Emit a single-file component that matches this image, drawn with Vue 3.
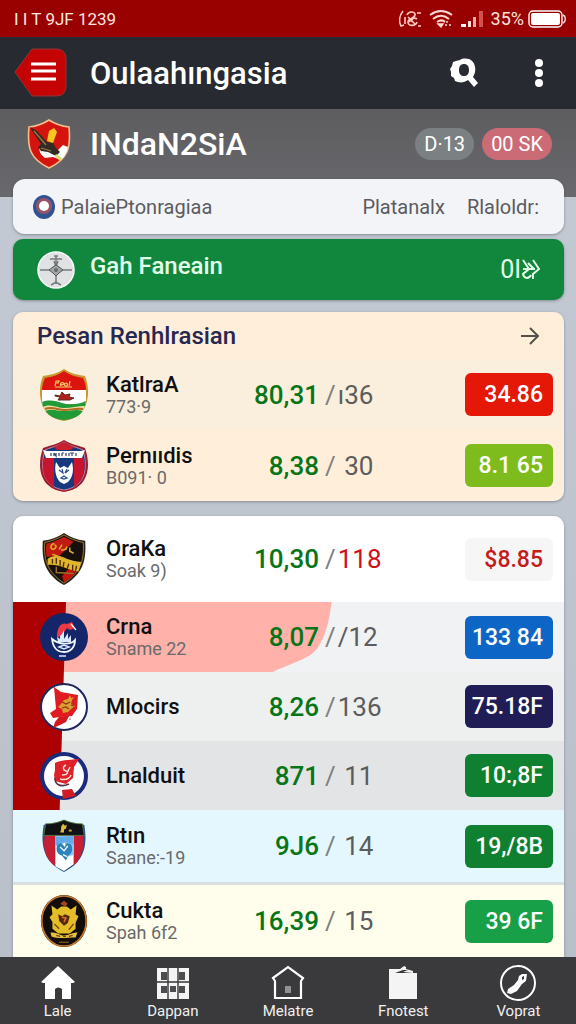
<script setup>
import { ref } from 'vue'

const activeNav = ref('home')

// teams on the cream card
const favourites = [
  { crest: 'kattra', name: 'KatlraA', sub: '773·9', score: '80,31', rest: '/ı36', odds: '34.86', tone: 'beige', color: 'red' },
  { crest: 'pernudis', name: 'Pernııdis', sub: 'B091· 0', score: '8,38', rest: '/ 30', odds: '8.1 65', tone: 'cream', color: 'lime' }
]

// the striped group has the red band running behind its crests
const groups = [
  {
    id: 'top',
    teams: [
      { crest: 'oraka', name: 'OraKa', sub: 'Soak 9)', score: '10,30', rest: '/118', odds: '$8.85', tone: 'white', color: 'plain', alert: true }
    ]
  },
  {
    id: 'mid',
    striped: true,
    teams: [
      { crest: 'crna', name: 'Crna', sub: 'Sname 22', score: '8,07', rest: '//12', odds: '133 84', tone: 'grey', color: 'blue', swoosh: true },
      { crest: 'mlocirs', name: 'Mlocirs', score: '8,26', rest: '/136', odds: '75.18F', tone: 'silver', color: 'navy' },
      { crest: 'lnalduit', name: 'Lnalduit', score: '871', rest: '/ 11', odds: '10:,8F', tone: 'smoke', color: 'green' }
    ]
  },
  {
    id: 'low',
    teams: [
      { crest: 'run', name: 'Rtın', sub: 'Saane:-19', score: '9J6', rest: '/ 14', odds: '19,/8B', tone: 'sky', color: 'green' },
      { crest: 'cukta', name: 'Cukta', sub: 'Spah 6f2', score: '16,39', rest: '/ 15', odds: '39 6F', tone: 'ivory', color: 'emerald' }
    ]
  }
]

const cards = [
  { id: 'fav', title: 'Pesan Renhlrasian', groups: [{ id: 'fav', teams: favourites }] },
  { id: 'all', groups }
]

const navItems = [
  { id: 'home', label: 'Lale' },
  { id: 'grid', label: 'Dappan' },
  { id: 'house', label: 'Melatre' },
  { id: 'bag', label: 'Fnotest' },
  { id: 'tool', label: 'Voprat' }
]
</script>

<template>
  <div class="app">
    <svg class="sprite" aria-hidden="true">
      <symbol id="crest-kattra" viewBox="0 0 50 54">
        <path d="M25 1c6 4 13 6 21 7 5 12 4 28-4 37-5 5-11 7-17 8-6-1-12-3-17-8C0 36-1 20 4 8 12 7 19 5 25 1z" fill="#c79a2e" />
        <path d="M25 3c6 4 12 6 19 7 2 4 3 8 3 12H3c0-4 1-8 3-12 7-1 13-3 19-7z" fill="#dc1410" />
        <path d="M3 22h44v14H3z" fill="#fff" />
        <path d="M3 34c8-3 14-1 20 1s16 2 24-2c-1 12-9 18-22 19C12 51 5 45 3 34z" fill="#219a38" />
        <path d="M4 39c8-4 14 1 21 1s14-2 21-2l-2 5c-7-2-12 0-19 0s-12-3-19 0z" fill="#f2dfa3" />
        <path d="M6 41c7-3 13 1 19 1s13-2 19-1" fill="none" stroke="#b06c20" stroke-width="2" />
        <path d="M16 18l1-5h3l-1 2h-3m6 3c-2-3 2-5 3-2l-3 1m5-2c-2 0-2 3 0 3s2-3 0-3m4-2l-1 5m-14 1h17" fill="none" stroke="#f7cf6a" stroke-width="1.2" />
        <path d="M16 27l5 1 2-4 3 3 5-1-1 3 5 1-4 2H19l2-3-5-1z" fill="#b71c1c" stroke="#57301d" stroke-width="1" />
      </symbol>

      <symbol id="crest-pernudis" viewBox="0 0 50 54">
        <path d="M25 1c6 4 13 5 21 8 5 14 4 29-5 37-4 4-10 6-16 7-6-1-12-3-16-7C0 38-1 23 4 9 12 6 19 5 25 1z" fill="#9b1d33" />
        <path d="M25 3c6 4 12 5 19 8 4 13 3 26-4 33-4 4-9 6-15 7-6-1-11-3-15-7C3 37 2 24 6 11c7-3 13-4 19-8z" fill="#17377f" stroke="#e8c9cf" stroke-width=".6" />
        <path d="M5 19h10v29C6 43 2 33 5 19zM35 19h10c2 13-1 23-10 29z" fill="#c7152f" />
        <path d="M15 8l10-5 10 5-3 3H18z" fill="#c71f2e" />
        <path d="M4 11l4 1h34l4-1-3 8H7z" fill="#fff" />
        <path d="M12 14v3m3-3v3m0-3l2 3v-3m3 0v3m3-3v3m0-3h2m2 0v3m3-3v3m3-3v3m-2-3h4m2 0v3" fill="none" stroke="#36416d" stroke-width="1.2" />
        <path d="M17 23c-2 8 0 16 4 20l4 2 4-2c5-5 6-12 4-20l-4 6-4-2-4 2z" fill="#fff" />
        <path d="M20 31l4 3-1-4m7 1l-4 3 2-4M22 39l3-2 3 2-3 1z" fill="none" stroke="#244a95" stroke-width="1.2" />
      </symbol>

      <symbol id="crest-oraka" viewBox="0 0 48 56">
        <path d="M24 1c6 4 13 7 22 8 1 19-1 34-22 46C3 43 1 28 2 9c9-1 16-4 22-8z" fill="#2a2114" />
        <path d="M24 3c6 4 12 6 20 8 1 17-2 30-20 42C6 41 3 28 4 11c8-2 14-4 20-8z" fill="#15100b" stroke="#9d7b35" stroke-width="1" />
        <path d="M24 5c4 2 7 4 10 5L20 24 6 26c-1-5-1-10 0-14 7-1 12-4 18-7z" fill="#c01a12" />
        <path d="M28 39l10-3c-2 7-6 11-14 16l-2-6z" fill="#c6130d" />
        <path d="M7 28c10-8 18 2 35 3l-3 10c-12-2-19-8-32-7z" fill="#e0b72c" />
        <path d="M12 28v5m4-6v6m4-4v6m4-4l-1 6m6-4l-2 6m6-5v6m4-5l-1 5" fill="none" stroke="#4d2911" stroke-width="1.4" />
        <path d="M14 12c-5 1-4 6-1 6 3-1 4-5 1-4m5 4l3-5m-1 6l5-1 1-3m3 1v4l4 2m-22 1l14 5" fill="none" stroke="#e2a62c" stroke-width="1.6" />
        <path d="M16 36v6l18 1" fill="none" stroke="#a06b29" stroke-width="1.5" />
      </symbol>

      <symbol id="crest-crna" viewBox="0 0 50 50">
        <circle cx="25" cy="25" r="24" fill="#142669" />
        <path d="M18 22c1-8 5-12 10-10l5-2 3 6-5 2-3-2-5 7-5 3z" fill="#ed3846" />
        <path d="M32 12l5 6" stroke="#fff" stroke-width="1.2" />
        <path d="M21 24l2-2 2-4v9l4-6v6l3-4v7H19l-1-5 3 2z" fill="#d8eaff" />
        <path d="M13 27c1 9 5 13 12 13s11-5 11-12c-4 5-16 5-23-1z" fill="none" stroke="#eef6ff" stroke-width="1.8" />
        <path d="M20 35l5-2 5 2-5 2zM20 44h7" fill="none" stroke="#d8eaff" stroke-width="1.5" />
      </symbol>

      <symbol id="crest-mlocirs" viewBox="0 0 50 50">
        <circle cx="25" cy="25" r="23" fill="#fff" stroke="#20275e" stroke-width="2" />
        <path d="M15 5l7 5 17 3-1 14-5 7-12 1-7 1-3-5 6-4z" fill="#e01c20" />
        <path d="M26 34h4l-3 6-6 3-7 3 2-6 4-5z" fill="#d41820" />
        <path d="M31 13l-2 4-4 1-3 4-3 3 4 2 1 4 5-1 3-3 4-3-4-2 1-4 2-3-3 1z" fill="#d7a132" />
        <path d="M23 20l4 2 4-2m-8 6l4-1 3 2m2-4l3 1" fill="none" stroke="#983010" stroke-width="1.2" />
        <circle cx="31" cy="37" r="1" fill="#d88d8b" />
      </symbol>

      <symbol id="crest-lnalduit" viewBox="0 0 50 50">
        <circle cx="25" cy="25" r="22" fill="#fff" stroke="#1b2b7c" stroke-width="4" />
        <path d="M16 12c6-3 12-3 24-4l-5 8-1 11-7 6-11-3-1-6 1-5z" fill="#df2028" />
        <path d="M23 39l10-1 4 7-13 3z" fill="#cf1b26" />
        <path d="M27 14c-4 2-3 5 0 6s2 4-4 4m8-8l-3 6m4 2c-2 5-7 5-11 4" fill="none" stroke="#ffe2d9" stroke-width="1.4" />
        <path d="M16 27c0 8 7 9 14 6" fill="none" stroke="#563443" stroke-width="1.6" />
      </symbol>

      <symbol id="crest-run" viewBox="0 0 48 56">
        <path d="M24 1c6 2 14 4 21 5 4 23-1 39-21 49C4 45-1 29 3 6c7-1 15-3 21-5z" fill="#25508b" />
        <path d="M4 17h11v32C4 41 2 30 4 17zM34 17h10c1 13-1 23-10 31z" fill="#c51e35" />
        <path d="M15 17h19v30l-10 7-9-5z" fill="#fff" />
        <path d="M25 17h9v20l-9 3z" fill="#8cc6ef" />
        <path d="M15 18h19v8l-8-2-11 4z" fill="#62abe9" />
        <path d="M5 5c7 0 13-1 19-4 6 3 12 4 19 4l2 12H3z" fill="#101115" stroke="#63813c" stroke-width=".8" />
        <path d="M21 8l2-3 2 2 2-1-1 4-2 1v3h-4l1-3z" fill="#dfbd36" />
        <path d="M29 12h3" stroke="#d1a340" stroke-width="2" />
        <path d="M17 27c-2 5 0 10 5 11l4 5 2-5c4-1 6-7 3-12l-4-1-2 4-4-4z" fill="#2a82be" />
        <path d="M20 29l4 4 4-5m-5 9l4 2" fill="none" stroke="#fff" stroke-width="1.3" />
      </symbol>

      <symbol id="crest-cukta" viewBox="0 0 50 56">
        <ellipse cx="25" cy="28" rx="24" ry="27" fill="#211006" />
        <ellipse cx="25" cy="28" rx="23" ry="26" fill="#120d09" stroke="#ca7b2d" stroke-width="1.6" />
        <path d="M12 12l6 4 4-3h6l4 3 6-4-1 9 3 2-3 7v6l-6 5H19l-6-5v-7l-3-5 3-3z" fill="#e4bd28" />
        <path d="M21 10l4-3 4 3-3 3z" fill="#aa4421" />
        <path d="M19 21l4 2 3-2 5 2-2 7-4 3-5-5z" fill="#542a12" />
        <path d="M23 24l4 1-2 4" fill="none" stroke="#e4722d" stroke-width="1.6" />
        <path d="M15 31l5 5m15-5l-5 6" stroke="#79500e" stroke-width="1.5" />
        <path d="M11 40c7-1 9 3 14 3s10-4 14-3l-2 5c-7 0-18 2-25-1z" fill="#e7bf3c" />
        <path d="M17 43l4 1m3 0h3m3 0l4-1" stroke="#5d3c12" stroke-width="1.2" />
        <path d="M20 50h10" stroke="#9c701f" stroke-width="1" />
      </symbol>
    </svg>

    <div class="status">
      <span class="status__time">I I T 9JF 1239</span>
      <div class="status__icons">
        <svg width="23" height="18" viewBox="0 0 23 18" fill="none" stroke="#ffc9c2" stroke-width="1.6">
          <path d="M4 1C0 6 0 12 2 16l3-1M8 5c2-5 9-3 8 0-1 4-7 3-7 7 0 5 8 4 9 0M9 7l7 7m0-8l-6 6m8-9h4m-4 6c-3-2-6 0-5 3M6 7v7m13 2h3" />
        </svg>
        <svg width="24" height="18" viewBox="0 0 24 18" fill="none" stroke="#ffd8d2" stroke-width="2">
          <path d="M1 5c7-5 15-5 22 0M4 9c5-4 11-4 16 0M8 12c3-2 6-2 8 0" />
          <path d="M9 14l3 3 2-3zM18 11v2m-2 2h2m2 0h2" fill="#ffd8d2" stroke-width="1.4" />
        </svg>
        <svg width="24" height="18" viewBox="0 0 24 18">
          <path d="M1 14h5v3H1z" fill="#fff" />
          <path d="M8 11h3v6H8z" fill="#ffe1de" />
          <path d="M13 7h3v10h-3z" fill="#f6aaa6" />
          <path d="M19 1h4v16h-4z" fill="#d4514f" />
        </svg>
        <span class="status__battery">35%</span>
        <svg width="38" height="18" viewBox="0 0 38 18">
          <rect x="1" y="1" width="33" height="16" rx="4" fill="none" stroke="#fff" stroke-width="1.4" />
          <rect x="3" y="3" width="29" height="12" rx="2" fill="#fff" />
          <path d="M35 5c3 1 3 7 0 8" fill="none" stroke="#ffd3cf" stroke-width="1.4" />
        </svg>
      </div>
    </div>

    <header class="topbar">
      <button class="topbar__menu" type="button" aria-label="Menu">
        <svg width="54" height="50" viewBox="0 0 54 50">
          <path d="M18 1h24q10 0 10 10v27q0 10-10 10H18L1 24z" fill="#c40304" stroke="#8f3438" stroke-width="1" />
          <path d="M17 16h25M17 23h25M17 31h25" stroke="#fff" stroke-width="3" />
        </svg>
      </button>
      <h1 class="topbar__title">Oulaahıngasia</h1>
      <button class="topbar__icon" type="button" aria-label="Search">
        <svg width="30" height="30" viewBox="0 0 30 30">
          <path
            fill="#fff"
            fill-rule="evenodd"
            d="M11 2c3-2 9-2 12 1 4 4 4 10 2 14l-1 2 5 6-4 4-6-7c-4 3-9 3-13 1l-1-3-3-2v-4l-1-3 2-3 1-4 3-1zM10 12c0 4 2 6 5 6s5-2 5-6-2-6-5-6-5 2-5 6z"
          />
        </svg>
      </button>
      <button class="topbar__icon" type="button" aria-label="More">
        <svg width="12" height="30" viewBox="0 0 12 30" fill="#fff">
          <circle cx="6" cy="5" r="4" />
          <circle cx="6" cy="15" r="4" />
          <circle cx="6" cy="25" r="4" />
        </svg>
      </button>
    </header>

    <main class="content">
      <section class="country">
        <svg width="44" height="50" viewBox="0 0 44 50">
          <path d="M22 1c6 4 12 6 20 7 2 21-1 32-20 41C3 40 0 29 2 8c8-1 14-3 20-7z" fill="#d5130f" stroke="#f3c08c" stroke-width="1.6" />
          <path d="M13 26l7 2 10 4 6-6 5 2c-1 6-4 10-7 13l-8-3-8 1c-4-3-7-7-5-13z" fill="#fff" />
          <path d="M3 8l7 4 10 11 6 1 3 5 4 4-4 4-8-4-7-1-3-4 3-3L6 13z" fill="#322c25" />
          <path d="M22 12l5-3 3 4-4 11-6-2z" fill="#f5c720" />
          <path d="M7 12l12 14m-5 3l10 3" stroke="#9b7b42" stroke-width="1.3" />
          <path d="M29 35l6 4-2 3-5-5z" fill="#d8de75" />
        </svg>
        <h2 class="country__name">INdaN2SiA</h2>
        <span class="pill">D·13</span>
        <span class="pill pill--rose">00 SK</span>
      </section>

      <div class="filter">
        <svg width="22" height="24" viewBox="0 0 22 24">
          <ellipse cx="11" cy="12" rx="11" ry="12" fill="#315390" />
          <ellipse cx="11" cy="11" rx="8" ry="8" fill="#96546b" />
          <circle cx="11" cy="11" r="5" fill="#fff" />
        </svg>
        <span class="filter__label">PalaiePtonragiaa</span>
        <button class="filter__tab" type="button">Platanalx</button>
        <button class="filter__tab" type="button">Rlaloldr:</button>
      </div>

      <a class="banner" href="#">
        <svg width="38" height="38" viewBox="0 0 38 38">
          <circle cx="19" cy="19" r="18" fill="#dfe1e2" stroke="#f5fff7" stroke-width="1.5" />
          <path d="M19 5v28M3 19h32M13 8h12M17 5h4m-4 5l2 6 2-6M14 34l5-3 5 3" fill="none" stroke="#777b7d" stroke-width="1.5" />
          <path d="M16 16l3-2 3 2 4 3-4 3-3 3-3-3-4-3z" fill="#a2a4a5" stroke="#4f5557" />
          <circle cx="19" cy="19" r="2" fill="#666c6d" />
        </svg>
        <span class="banner__title">Gah Faneain</span>
        <span class="banner__end">
          0I
          <svg width="19" height="21" viewBox="0 0 19 21" fill="none" stroke="#e4ffe9" stroke-width="2">
            <path d="M2 1l6 9-6 5c1 5 6 5 8 1M2 10h12M7 4l6 6M12 1l6 9-6 5v5" />
          </svg>
        </span>
      </a>

      <section v-for="card in cards" :key="card.id" class="card" :class="`card--${card.id}`">
        <div v-if="card.title" class="card__head">
          <h3 class="card__title">{{ card.title }}</h3>
          <button class="card__more" type="button" aria-label="Open">
            <svg width="20" height="20" viewBox="0 0 20 20" fill="none" stroke="#55504c" stroke-width="2">
              <path d="M1 10h17M10 2l8 8-8 8" />
            </svg>
          </button>
        </div>
        <ul
          v-for="group in card.groups"
          :key="group.id"
          class="group"
          :class="{ 'group--striped': group.striped }"
        >
          <li v-for="team in group.teams" :key="team.crest" class="team" :class="`team--${team.tone}`">
            <svg v-if="team.swoosh" class="team__swoosh" viewBox="0 0 320 70" preserveAspectRatio="none">
              <path d="M0 0h319c-2 18-6 34-14 46-8 11-26 15-45 24H0z" fill="#ffb1aa" />
            </svg>
            <svg class="team__crest"><use :href="`#crest-${team.crest}`" /></svg>
            <div class="team__text">
              <div class="team__name">{{ team.name }}</div>
              <div v-if="team.sub" class="team__sub">{{ team.sub }}</div>
            </div>
            <div class="team__score">{{ team.score }}</div>
            <div class="team__rest" :class="{ 'team__rest--alert': team.alert }">
              <span class="team__slash">{{ team.rest[0] }}</span>{{ team.rest.slice(1) }}
            </div>
            <button class="odds" :class="`odds--${team.color}`" type="button">{{ team.odds }}</button>
          </li>
        </ul>
      </section>
    </main>

    <nav class="nav">
      <a
        v-for="item in navItems"
        :key="item.id"
        class="nav__item"
        href="#"
        :aria-current="activeNav === item.id ? 'page' : undefined"
        @click.prevent="activeNav = item.id"
      >
        <svg width="36" height="36" viewBox="0 0 36 36">
          <path v-if="item.id === 'home'" d="M18 1l17 16-2 1h-2v16h-9V24q-4-3-7 0v10H5V18H3l-2-1z" fill="#fff" />
          <g v-else-if="item.id === 'grid'">
            <path d="M2 3h32v31H2z" fill="#f4f4f4" />
            <path d="M6 7h6v8H6zM24 7h6v8h-6zM6 21h6v7H6zM15 21h6v6h-6zM24 21h6v7h-6z" fill="#4c4c4e" />
            <path d="M13 3v31M23 3v31M2 17h32" stroke="#343436" stroke-width="1.4" />
          </g>
          <g v-else-if="item.id === 'house'">
            <path d="M3 13L18 2l15 11-2 3v17H5V16z" fill="none" stroke="#fff" stroke-width="2.2" />
            <path d="M15 21h6v7h-6z" fill="#929293" />
          </g>
          <g v-else-if="item.id === 'bag'">
            <path d="M4 4h11l4-3 2 1v2l7 2v2h4v26H4z" fill="#f4f4f4" />
            <path d="M10 8l8-3h5l-5 2 10 1z" fill="#38383a" />
          </g>
          <g v-else>
            <circle cx="18" cy="18" r="17" fill="none" stroke="#fff" stroke-width="2" />
            <path d="M19 11l3-2h5l-1 7-4 3-5 7-6 3-4-1 1-4 6-4 4-5z" fill="#fff" />
            <path d="M22 12l2-1v3l-2 1z" fill="#39393b" />
          </g>
        </svg>
        <span>{{ item.label }}</span>
      </a>
    </nav>
  </div>
</template>

<style>
body {
  margin: 0;
  background: #c1c7d0;
}
</style>

<style scoped>
* {
  box-sizing: border-box;
}

.app {
  min-height: 100vh;
  display: flex;
  flex-direction: column;
  font-family: Roboto, 'Liberation Sans', sans-serif;
}

h1,
h2,
h3,
ul {
  margin: 0;
  padding: 0;
  list-style: none;
}

svg {
  display: block;
  flex: none;
}

button {
  font: inherit;
  color: inherit;
  padding: 0;
  border: 0;
  background: none;
  cursor: pointer;
}

a {
  color: inherit;
  text-decoration: none;
}

.sprite {
  position: absolute;
  width: 0;
  height: 0;
}

.status {
  height: 37px;
  padding: 0 10px 0 14px;
  display: flex;
  align-items: center;
  justify-content: space-between;
  background: #990000;
  color: #ffe4df;
  font-size: 18px;
}

.status__time {
  font-size: 17px;
}

.status__icons {
  display: flex;
  align-items: center;
  gap: 7px;
}

.status__battery {
  margin-right: -3px;
}

.topbar {
  height: 72px;
  padding: 0 31px 0 14px;
  display: flex;
  align-items: center;
  background: #272a31;
  color: #fff;
}

.topbar__title {
  flex: 1;
  margin-left: 22px;
  font-size: 31px;
  font-weight: 500;
}

.topbar__icon {
  margin-left: 54px;
}

.content {
  flex: 1;
  padding: 0 12px 0 13px;
  background: linear-gradient(#5d5d60, #69696d 88px, #c3c9d2 88px, #b9c0ca);
}

.country {
  height: 70px;
  padding: 0 12px 0 14px;
  display: flex;
  align-items: center;
  color: #fff;
}

.country__name {
  flex: 1;
  margin-left: 19px;
  font-size: 32px;
  font-weight: 500;
}

.pill {
  height: 32px;
  margin-left: 8px;
  padding: 0 9px;
  border-radius: 16px;
  background: #7b8083;
  font-size: 20px;
  line-height: 32px;
}

.pill--rose {
  background: #cb6b75;
}

.filter {
  height: 55px;
  padding: 0 25px 0 20px;
  display: flex;
  align-items: center;
  border-radius: 12px;
  background: #f3f4f8;
  box-shadow: 0 1px 3px rgba(40, 50, 60, 0.4);
  color: #5b5b60;
  font-size: 20px;
}

.filter__label {
  flex: 1;
  margin-left: 6px;
}

.filter__tab {
  margin-left: 22px;
}

.banner {
  height: 61px;
  margin-top: 5px;
  padding: 0 24px;
  display: flex;
  align-items: center;
  border-radius: 10px;
  background: #10873d;
  box-shadow: 0 1px 3px rgba(40, 50, 60, 0.4);
  color: #e4ffe9;
  font-size: 25px;
}

.banner__title {
  flex: 1;
  margin-left: 15px;
  padding-bottom: 8px;
  font-size: 24px;
  font-weight: 500;
}

.banner__end {
  display: flex;
  align-items: center;
}

.card {
  margin-top: 15px;
  overflow: hidden;
  border-radius: 10px;
  box-shadow: 0 1px 3px rgba(40, 50, 60, 0.4);
}

.card--fav {
  margin-top: 12px;
}

.card--all {
  border-radius: 10px 10px 0 0;
}

.card__head {
  height: 47px;
  padding: 0 24px;
  display: flex;
  align-items: center;
  justify-content: space-between;
  background: #ffeeda;
}

.card__title {
  color: #28274f;
  font-size: 24px;
  font-weight: 500;
}

.group {
  position: relative;
}

/* red band behind the crests, a little narrower at the foot */
.group--striped::before {
  content: '';
  position: absolute;
  z-index: 1;
  top: 0;
  bottom: 0;
  left: 0;
  width: 53px;
  background: #ad0000;
  clip-path: polygon(0 0, 100% 0, 88% 100%, 0 100%);
}

.team {
  position: relative;
  height: 71px;
  padding: 0 11px 0 26px;
  display: grid;
  grid-template-columns: 50px minmax(0, 1fr) 80px 146px 88px;
  align-items: center;
}

.team__swoosh {
  position: absolute;
  top: 0;
  left: 0;
  width: 58%;
  height: 100%;
}

.team__crest {
  position: relative;
  z-index: 2;
  width: 50px;
  height: 54px;
}

.team__text,
.team__score,
.team__rest {
  position: relative;
  white-space: nowrap;
}

.team__text {
  padding-left: 17px;
}

.team__name {
  color: #101012;
  font-size: 22px;
  font-weight: 500;
  line-height: 24px;
}

.team__sub {
  color: #6a6a6a;
  font-size: 18px;
  line-height: 20px;
}

.team__score {
  color: #087518;
  font-size: 26px;
  font-weight: 500;
  text-align: right;
}

.team__rest {
  padding-left: 6px;
  color: #5c5c5c;
  font-size: 26px;
}

.team__rest--alert {
  color: #d01018;
}

.team__slash {
  margin-right: 2px;
  color: #808080;
}

.team--white {
  height: 86px;
  background: #fff;
}

.team--beige {
  background: #f9efdc;
}

.team--cream {
  background: #ffefda;
}

.team--grey {
  height: 70px;
  background: #f0f2f3;
}

.team--silver {
  height: 69px;
  background: #eeefef;
}

.team--smoke {
  height: 69px;
  background: #e3e4e6;
}

.team--sky {
  height: 75px;
  border-bottom: 3px solid #d9dfe1;
  background: #e4f7fe;
}

.team--ivory {
  height: 72px;
  background: #fffeed;
}

.odds {
  height: 43px;
  padding-right: 10px;
  border-radius: 6px;
  color: #fff;
  font-size: 23px;
  font-weight: 500;
  text-align: right;
  white-space: nowrap;
}

.odds--red {
  background: #e51707;
}

.odds--lime {
  background: #7ebb1d;
}

.odds--plain {
  background: #f6f6f6;
  color: #c41c1c;
}

.odds--blue {
  background: #0d66c6;
}

.odds--navy {
  background: #201c56;
}

.odds--green {
  background: #0f8030;
}

.odds--emerald {
  background: #18a048;
}

.nav {
  position: sticky;
  z-index: 3;
  bottom: 0;
  height: 67px;
  padding-top: 8px;
  display: flex;
  background: #3a3a3c;
  color: #f0f0f0;
  font-size: 15px;
  line-height: 20px;
}

.nav__item {
  flex: 1;
  display: flex;
  flex-direction: column;
  align-items: center;
}
</style>
